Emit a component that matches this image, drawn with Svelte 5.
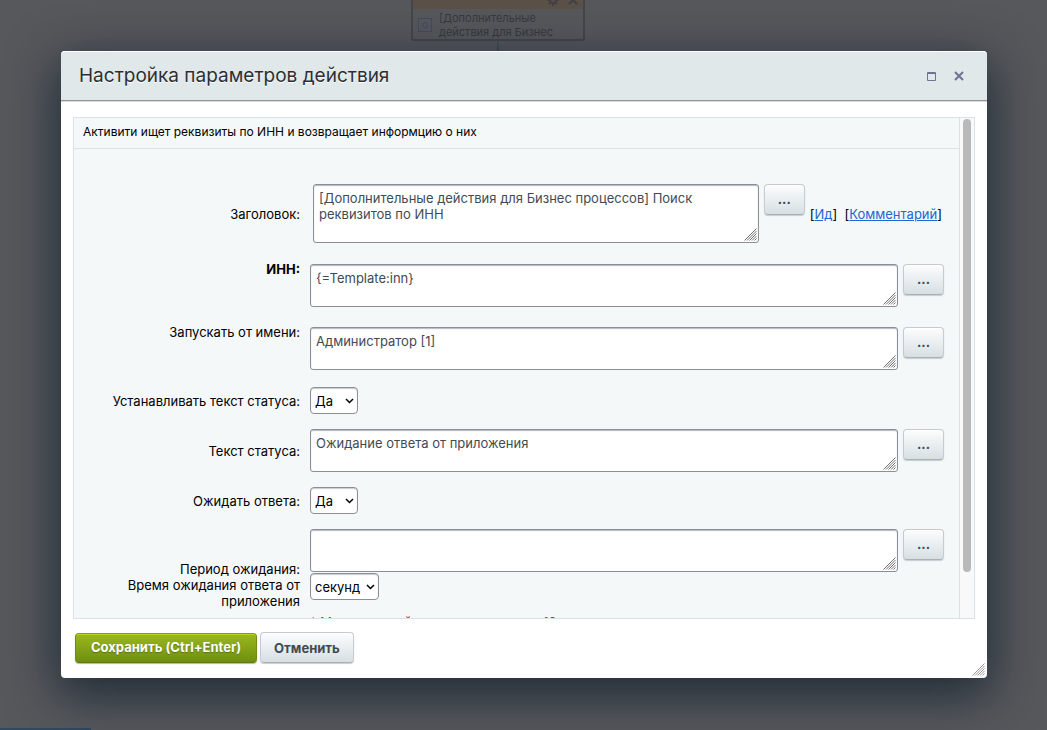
<script>
    let title = $state('[Дополнительные действия для Бизнес процессов] Поиск реквизитов по ИНН');
    let inn = $state('{=Template:inn}');
    let runAs = $state('Администратор [1]');
    let setStatus = $state('Да');
    let statusText = $state('Ожидание ответа от приложения');
    let waitAnswer = $state('Да');
    let period = $state('');
    let periodUnit = $state('секунд');
</script>

{#snippet grip()}
    <svg class="grip" width="13" height="13" viewBox="0 0 13 13" aria-hidden="true">
        <path d="M0.5 12.5l12-12M3 12.5l9.5-9.5M5.5 12.5l7-7M8 12.5l4.5-4.5M10.5 12.5l2-2" />
    </svg>
{/snippet}

{#snippet chevron()}
    <svg class="chevron" width="9" height="6" viewBox="0 0 9 6" aria-hidden="true">
        <path d="M1 1l3.5 3.5L8 1" />
    </svg>
{/snippet}

<div class="page">
    <div class="node">
        <div class="node-head">
            <svg width="12" height="12" viewBox="0 0 12 12">
                <circle cx="6" cy="6" r="3" />
                <path d="M6 0v3M6 9v3M0 6h3M9 6h3M2 2l2 2M8 8l2 2M2 10l2-2M8 4l2-2" />
            </svg>
            <svg width="12" height="12" viewBox="0 0 12 12">
                <path d="M2 2l8 8M10 2l-8 8" />
            </svg>
        </div>
        <div class="node-body">
            <svg width="14" height="14" viewBox="0 0 14 14">
                <rect x="0.5" y="0.5" width="13" height="13" />
                <circle cx="7" cy="7" r="2.5" />
            </svg>
            <span>[Дополнительные действия для Бизнес</span>
        </div>
    </div>
    <div class="node-line"></div>
    <div class="corner-strip"></div>

    <div class="dialog" role="dialog" aria-labelledby="dialog-title">
        <header class="dialog-head">
            <h1 id="dialog-title">Настройка параметров действия</h1>
            <button class="head-btn" aria-label="Развернуть">
                <svg width="9" height="9" viewBox="0 0 9 9">
                    <path d="M0.5 0.5h8v8h-8zM0 1.5h9" />
                </svg>
            </button>
            <button class="head-btn" aria-label="Закрыть">
                <svg class="cross" width="10" height="10" viewBox="0 0 10 10">
                    <path d="M1 1l8 8M9 1l-8 8" />
                </svg>
            </button>
        </header>

        <div class="dialog-body">
            <div class="scroll-box">
                <div class="content">
                    <p class="description">Активити ищет реквизиты по ИНН и возвращает информцию о них</p>

                    <div class="rows first">
                        <div class="row title-row">
                            <label for="title">Заголовок:</label>
                            <div class="field">
                                <div class="area tall">
                                    <textarea id="title" bind:value={title}></textarea>
                                    {@render grip()}
                                </div>
                                <button class="btn more">...</button>
                                <span class="links">[<a href="#id">Ид</a>]&nbsp; [<a href="#comment">Комментарий</a>]</span>
                            </div>
                        </div>
                        <div class="row top">
                            <label for="inn" class="required">ИНН:</label>
                            <div class="field">
                                <div class="area">
                                    <textarea id="inn" bind:value={inn}></textarea>
                                    {@render grip()}
                                </div>
                                <button class="btn more">...</button>
                            </div>
                        </div>
                        <div class="row top">
                            <label for="run-as">Запускать от имени:</label>
                            <div class="field">
                                <div class="area">
                                    <textarea id="run-as" bind:value={runAs}></textarea>
                                    {@render grip()}
                                </div>
                                <button class="btn more">...</button>
                            </div>
                        </div>
                    </div>

                    <div class="rows">
                        <div class="row">
                            <label for="set-status">Устанавливать текст статуса:</label>
                            <div class="select">
                                <select id="set-status" bind:value={setStatus}>
                                    <option>Да</option>
                                    <option>Нет</option>
                                </select>
                                {@render chevron()}
                            </div>
                        </div>
                        <div class="row">
                            <label for="status-text">Текст статуса:</label>
                            <div class="field">
                                <div class="area">
                                    <textarea id="status-text" bind:value={statusText}></textarea>
                                    {@render grip()}
                                </div>
                                <button class="btn more">...</button>
                            </div>
                        </div>
                        <div class="row">
                            <label for="wait-answer">Ожидать ответа:</label>
                            <div class="select">
                                <select id="wait-answer" bind:value={waitAnswer}>
                                    <option>Да</option>
                                    <option>Нет</option>
                                </select>
                                {@render chevron()}
                            </div>
                        </div>
                        <div class="row">
                            <label for="period">Период ожидания:<br />Время ожидания ответа от приложения</label>
                            <div class="period">
                                <div class="field">
                                    <div class="area">
                                        <textarea id="period" bind:value={period}></textarea>
                                        {@render grip()}
                                    </div>
                                    <button class="btn more">...</button>
                                </div>
                                <div class="select wide">
                                    <select aria-label="Единица времени" bind:value={periodUnit}>
                                        <option>секунд</option>
                                        <option>минут</option>
                                        <option>часов</option>
                                        <option>дней</option>
                                    </select>
                                    {@render chevron()}
                                </div>
                                <p class="note">* Минимальный период ожидания - 10 минут</p>
                            </div>
                        </div>
                    </div>
                </div>
                <div class="track"><div class="thumb"></div></div>
            </div>
        </div>

        <footer class="dialog-foot">
            <button class="btn save">Сохранить (Ctrl+Enter)</button>
            <button class="btn cancel">Отменить</button>
            {@render grip()}
        </footer>
    </div>
</div>

<style>
    :global(body) {
        margin: 0;
        background: #57585c;
        font-family: Inter, "Open Sans", sans-serif;
        font-size: 13px;
        line-height: 16px;
        color: #000;
    }

    * {
        box-sizing: border-box;
    }

    .page {
        position: relative;
        display: flex;
        height: 100vh;
        padding: 51px 60px 52px 61px;
        overflow: hidden;
    }

    svg {
        fill: none;
        stroke: currentColor;
    }

    .node {
        position: absolute;
        top: -10px;
        left: 411px;
        width: 174px;
        height: 51px;
        border: 2px solid #45464a;
        border-radius: 2px;
        color: #38393e;
        font-size: 11px;
        line-height: 14px;
    }

    .node-head {
        display: flex;
        justify-content: flex-end;
        align-items: flex-end;
        gap: 8px;
        height: 17px;
        padding: 0 4px 3px;
        background: #5b5148;
        color: #414145;
    }

    .node-head svg {
        stroke-width: 2;
    }

    .node-body {
        display: flex;
        align-items: center;
        gap: 7px;
        padding: 2px 5px;
    }

    .node-body svg {
        flex-shrink: 0;
        color: #3e4c66;
    }

    .node-line {
        position: absolute;
        top: 41px;
        left: 497px;
        width: 2px;
        height: 10px;
        background: #474b59;
    }

    .corner-strip {
        position: absolute;
        bottom: 0;
        left: 0;
        width: 91px;
        height: 2px;
        background: #2f4a63;
    }

    .dialog {
        position: relative;
        display: flex;
        flex: 1;
        flex-direction: column;
        min-width: 0;
        background: #fff;
        border-radius: 4px;
        box-shadow: 0 14px 50px 4px rgba(12, 30, 42, 0.75);
    }

    .dialog-head {
        display: flex;
        align-items: center;
        gap: 8px;
        height: 50px;
        padding: 0 18px;
        background: #e0e8ea;
        border-top: 1px solid #fff;
        border-bottom: 1px solid #929299;
        border-radius: 4px 4px 0 0;
        box-shadow: 0 1px 0 #dcdce0;
    }

    h1 {
        flex: 1;
        margin: 0;
        font-size: 19px;
        font-weight: 400;
        line-height: 28px;
        color: #2c2e33;
        text-shadow: 0 1px 0 #fff;
    }

    .head-btn {
        display: flex;
        align-items: center;
        justify-content: center;
        width: 20px;
        height: 20px;
        padding: 0;
        background: none;
        border: 0;
        color: #6b7494;
        cursor: pointer;
    }

    .cross {
        stroke-width: 2;
    }

    .dialog-body {
        flex: 1;
        min-height: 0;
        padding: 16px 12px 0;
    }

    .scroll-box {
        display: flex;
        height: 100%;
        background: #f4f8f9;
        border: 1px solid #d9e2e9;
    }

    .content {
        flex: 1;
        min-width: 0;
        overflow-y: auto;
        scrollbar-width: none;
    }

    .track {
        width: 15px;
        padding: 1px 3px;
        background: #f9f9f9;
        border-left: 1px solid #d9e2e9;
    }

    .thumb {
        width: 8px;
        height: 91%;
        background: #b9b9b9;
        border-radius: 4px;
    }

    .description {
        margin: 0 0 35px;
        padding: 6px 9px 8px;
        border-bottom: 1px solid #d9e2e9;
        font-size: 12px;
    }

    .rows {
        display: grid;
        gap: 15px;
        padding-right: 15px;
    }

    .rows.first {
        gap: 17px;
        padding-bottom: 17px;
    }

    .row {
        display: grid;
        grid-template-columns: 226px minmax(0, 1fr);
        column-gap: 10px;
        align-items: center;
    }

    .row label {
        padding-left: 36px;
        text-align: right;
    }

    .row.top {
        align-items: start;
    }

    .row.top .field {
        padding-top: 3px;
    }

    .title-row {
        padding-bottom: 1px;
    }

    .title-row .field {
        padding-left: 3px;
    }

    .required {
        font-weight: 700;
    }

    .field {
        display: flex;
        align-items: flex-start;
        gap: 5px;
    }

    .area {
        position: relative;
        display: flex;
        flex: 1;
        height: 43px;
    }

    .area.tall {
        height: 59px;
    }

    textarea {
        flex: 1;
        min-width: 0;
        margin: 0;
        padding: 5px;
        background: #fff;
        border: 1px solid #898e9b;
        border-radius: 3px;
        box-shadow: inset 0 1px 1px #b4b8c0;
        color: #3f4b54;
        font: inherit;
        resize: none;
    }

    .grip {
        position: absolute;
        right: 2px;
        bottom: 2px;
        color: #6f6f6f;
        pointer-events: none;
    }

    .links {
        align-self: center;
        padding-right: 2px;
        white-space: nowrap;
    }

    a {
        color: #2067d6;
        text-decoration: underline;
    }

    .select {
        position: relative;
        width: 48px;
        height: 27px;
    }

    .select.wide {
        width: 69px;
        margin-top: 1px;
    }

    select {
        appearance: none;
        width: 100%;
        height: 100%;
        padding: 0 4px;
        background: #fff;
        border: 1px solid #8c8e94;
        border-radius: 4px;
        box-shadow: inset 0 1px 1px #c9cccf;
        color: #000;
        font: inherit;
    }

    .chevron {
        position: absolute;
        top: 11px;
        right: 4px;
        stroke-width: 1.5;
        pointer-events: none;
    }

    .note {
        margin: 14px 0 11px;
        color: #d8232a;
    }

    .btn {
        height: 31px;
        padding: 0 13px;
        background: linear-gradient(#fcfdfd, #d7dfe3);
        border: 1px solid #c5cbce;
        border-bottom-color: #aab0b4;
        border-radius: 4px;
        box-shadow: inset 0 1px 0 #fff, 0 1px 1px #c9cdd0;
        color: #3f4b54;
        font: inherit;
        font-weight: 700;
        white-space: nowrap;
        cursor: pointer;
    }

    .btn.more {
        width: 41px;
        padding: 0 0 2px;
    }

    .dialog-foot {
        display: flex;
        align-items: center;
        gap: 3px;
        padding: 13px 14px 15px;
    }

    .dialog-foot .grip {
        color: #9a9a9a;
    }

    .btn.save {
        height: 30px;
        padding: 0 15px 2px;
        background: linear-gradient(#9bb81c, #6f8e12);
        border-color: #7f9c14 #6f8b12 #5f7a10;
        box-shadow: inset 0 1px 0 #bdd32b, 0 1px 1px #b0b4b0;
        color: #fff;
        text-shadow: 0 1px 1px #5a7310;
    }
</style>
